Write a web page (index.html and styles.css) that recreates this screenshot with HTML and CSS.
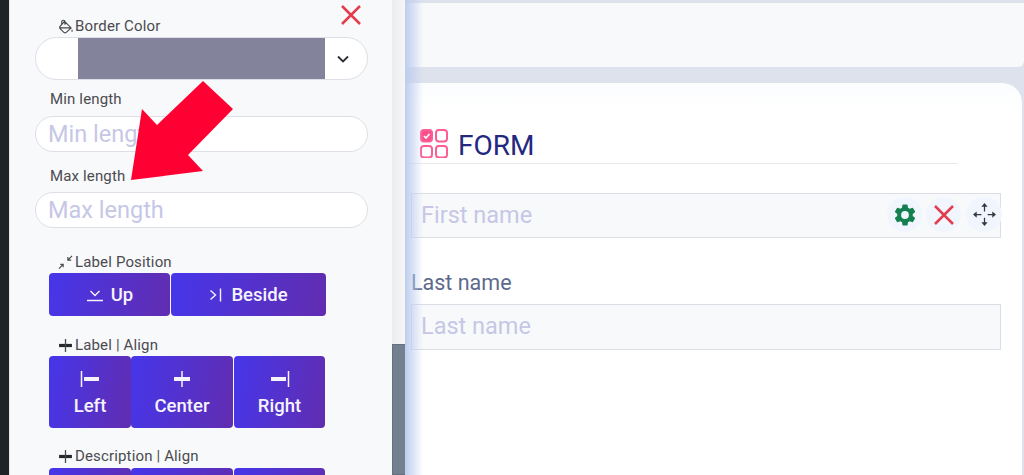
FILE: index.html
```html
<!DOCTYPE html>
<html>
	<head>
		<title>Form builder</title>
		<link rel="stylesheet" href="styles.css">
	</head>
	<body>
		<div class="Edge"></div>

		<div class="Panel">
			<svg class="Close" viewBox="0 0 22 22"><path d="M2 2L20 20M20 2L2 20" /></svg>

			<div class="Title">
				<svg class="TitleIcon" viewBox="0 0 16 16"><path d="M4 5.500V3a1.700 1.700 0 0 1 3.400 0V6M7 2.500L14 9.500L8.500 14.500Q7.500 15 6.500 14.500L2 10Q1.500 9 2 8zM2 9.500H13" /><path d="M15 11.500V13.500" /></svg>Border Color
			</div>
			<div class="ColorPick">
				<div class="Swatch"></div>
				<svg class="Chevron" viewBox="0 0 12 8"><path d="M1 1.500L6 6.500L11 1.500" /></svg>
			</div>

			<div class="FieldLabel FirstField">Min length</div>
			<input class="Pill MinPill" type="text" placeholder="Min length"/>
			<div class="FieldLabel MaxField">Max length</div>
			<input class="Pill" type="text" placeholder="Max length"/>

			<div class="Title PosTitle">
				<svg class="TitleIcon" viewBox="0 0 16 16"><path d="M1 14.500L5.500 10M2.500 10H5.500V13M15 1L10.500 5.500M10.500 2V5.500H14" /></svg>Label Position
			</div>
			<div class="BtnRow">
				<div class="Btn BtnUp">
					<svg class="BtnIcon" viewBox="0 0 18 14"><path d="M1 12.500H17M4.500 3L9 7.500L13.500 3" /></svg>Up
				</div>
				<div class="Btn BtnBeside">
					<svg class="BtnIcon" viewBox="0 0 14 14"><path d="M1.500 2.500L6.500 7L1.500 11.500M11.500 0.500V13.500" /></svg>Beside
				</div>
			</div>

			<div class="Title AlignTitle">
				<svg class="TitleIcon" viewBox="0 0 14 14"><path class="Thick" d="M1 7H13" /><path d="M7 1V13" /></svg>Label | Align
			</div>
			<div class="BtnRow">
				<div class="Btn Tall BtnLeft">
					<svg class="TallIcon" viewBox="0 0 20 18"><path d="M1.500 1V17" /><path class="Thick" d="M4 9H19" /></svg>Left
				</div>
				<div class="Btn Tall BtnCenter">
					<svg class="TallIcon" viewBox="0 0 20 18"><path d="M10 1V17" /><path class="Thick" d="M2 9H18" /></svg>Center
				</div>
				<div class="Btn Tall BtnRight">
					<svg class="TallIcon" viewBox="0 0 20 18"><path d="M18.500 1V17" /><path class="Thick" d="M1 9H16" /></svg>Right
				</div>
			</div>

			<div class="Title AlignTitle DescTitle">
				<svg class="TitleIcon" viewBox="0 0 14 14"><path class="Thick" d="M1 7H13" /><path d="M7 1V13" /></svg>Description | Align
			</div>
			<div class="BtnRow">
				<div class="Btn Tall BtnLeft"></div>
				<div class="Btn Tall BtnCenter"></div>
				<div class="Btn Tall BtnRight"></div>
			</div>
		</div>

		<div class="Scrollbar"><div class="Thumb"></div></div>

		<div class="Main">
			<div class="TopCard"></div>
			<div class="FormCard">
				<div class="FormHead">
					<svg class="FormIcon" viewBox="0 0 28 29">
						<rect class="On" x="1" y="1" width="11" height="11.500" rx="3" />
						<path class="Tick" d="M4 7l2 2 3.500-4" />
						<rect x="16" y="1" width="11" height="11.500" rx="3" />
						<rect x="1" y="17" width="11" height="11.500" rx="3" />
						<rect x="16" y="17" width="11" height="11.500" rx="3" />
					</svg>
					<span class="FormWord">FORM</span>
				</div>
				<div class="Rule"></div>

				<div class="Row">
					<input class="Box FirstBox" type="text" placeholder="First name"/>
					<div class="RowTools">
						<div class="Tool">
							<svg class="Gear" viewBox="0 0 24 24"><path d="M19.140 12.940c.04-.3.060-.61.060-.94s-.02-.64-.07-.94l2.030-1.580a.490.490 0 0 0 .12-.61l-1.920-3.320a.488.488 0 0 0-.59-.22l-2.390.96a7.030 7.030 0 0 0-1.620-.94l-.36-2.540a.484.484 0 0 0-.48-.41h-3.840a.474.474 0 0 0-.47.41l-.36 2.540c-.59.24-1.130.57-1.620.94l-2.390-.96a.470.470 0 0 0-.59.22L2.740 8.870a.470.470 0 0 0 .12.61l2.030 1.580c-.05.3-.09.63-.09.94s.02.64.07.94l-2.030 1.580a.490.490 0 0 0-.12.61l1.920 3.320c.12.22.37.29.59.22l2.390-.96c.5.380 1.030.7 1.620.94l.36 2.540c.05.24.24.41.48.41h3.840c.24 0 .44-.17.47-.41l.36-2.540c.59-.24 1.130-.56 1.620-.94l2.390.96c.22.08.47 0 .59-.22l1.920-3.320a.470.470 0 0 0-.12-.61l-2.010-1.580zM12 15.600A3.600 3.600 0 1 1 12 8.400a3.600 3.600 0 0 1 0 7.200z" /></svg>
						</div>
						<div class="Tool">
							<svg class="ToolX" viewBox="0 0 22 22"><path d="M2 2L20 20M20 2L2 20" /></svg>
						</div>
						<div class="Tool">
							<svg class="ToolMove" viewBox="0 0 24 24">
								<path d="M12 3V9M12 15V21M3 12H9M15 12H21" />
								<path class="Head" d="M12 1l-3 3.500h6zM12 23l-3-3.500h6zM1 12l3.500-3v6zM23 12l-3.500-3v6z" />
							</svg>
						</div>
					</div>
				</div>

				<div class="LastLabel">Last name</div>
				<input class="Box" type="text" placeholder="Last name"/>
			</div>
			<div class="Glow"></div>
		</div>

		<!-- annotation drawn over the screenshot -->
		<svg class="Arrow" viewBox="0 0 104 104"><path d="M73 0L103 28L58 74L73 90L1 99L12 28L27 44z" /></svg>
	</body>
</html>
```

FILE: styles.css
```css
html, body {margin: 0; height: 100%; overflow: hidden;}

body {
	display: flex;
	background-color: #f8f9fb;
	font-family: Roboto, "Liberation Sans", sans-serif;
}

.Edge {
	width: 9px;
	background-color: #1e2327;
	border-right: 1px solid #e4e6ea;
}

.Panel {
	position: relative;
	width: 333px;
	padding: 0 24px 0 25px;
	background-color: #f8f9fb;
	overflow: hidden;
	flex-shrink: 0;
}

.Close {
	position: absolute;
	top: 4px;
	left: 330px;
	width: 22px;
	height: 22px;
	fill: none;
	stroke: #e23d4d;
	stroke-width: 2.500;
}

.Title {
	display: flex;
	align-items: center;
	height: 18px;
	padding-left: 23px;
	font-size: 15px;
	letter-spacing: 0.15px;
	color: #4b4b4f;
}

.Panel > .Title:first-of-type {
	margin-top: 17px;
}

.TitleIcon {
	width: 15px;
	height: 15px;
	margin-right: 2px;
	fill: none;
	stroke: #45474b;
	stroke-width: 1.200;
}

.TitleIcon .Thick {
	stroke-width: 3;
	stroke: #25272b;
}

.ColorPick {
	display: flex;
	align-items: center;
	box-sizing: border-box;
	width: 333px;
	height: 43px;
	margin-top: 2px;
	background-color: white;
	border: 1px solid #dedfe6;
	border-radius: 22px;
}

.Swatch {
	width: 247px;
	height: 41px;
	margin-left: 42px;
	background-color: #83849c;
}

.Chevron {
	width: 12px;
	height: 8px;
	margin-left: 12px;
	fill: none;
	stroke: #2c2e33;
	stroke-width: 1.800;
}

.FieldLabel {
	height: 18px;
	padding-left: 15px;
	font-size: 15px;
	letter-spacing: 0.15px;
	line-height: 18px;
	color: #4b4b4f;
}

.FirstField {
	margin-top: 10px;
}

.MaxField {
	margin-top: 15px;
}

.Pill {
	display: block;
	box-sizing: border-box;
	width: 333px;
	height: 36px;
	margin-top: 7px;
	padding: 0 12px;
	background-color: white;
	border: 1px solid #dedfe6;
	border-radius: 18px;
	outline: none;
	font-family: inherit;
	font-size: 23.500px;
}

.MinPill {
	margin-top: 8px;
}

.Pill::placeholder, .Box::placeholder {
	color: #c6c7e6;
	opacity: 1;
}

.PosTitle {
	margin-top: 25px;
}

.BtnRow {
	display: flex;
	margin: 2px 0 0 14px;
}

.Btn {
	display: flex;
	align-items: center;
	justify-content: center;
	box-sizing: border-box;
	height: 43px;
	background-image: linear-gradient(100deg, #4636ea, #612db0);
	border-radius: 4px;
	font-size: 18.500px;
	font-weight: 500;
	color: #f5f4fd;
}

.BtnUp {width: 121px; margin-right: 1px;}
.BtnBeside {width: 155px;}

.BtnIcon {
	width: 18px;
	height: 14px;
	margin-right: 7px;
	fill: none;
	stroke: #f5f4fd;
	stroke-width: 1.400;
}

.BtnBeside .BtnIcon {
	width: 14px;
	margin-right: 8px;
}

.AlignTitle {
	margin-top: 20px;
}

.DescTitle {
	margin-top: 19px;
}

.DescTitle + .BtnRow {
	margin-top: 3px;
}

.Tall {
	flex-direction: column;
	height: 72px;
	padding-top: 3px;
}

.BtnLeft {width: 82px;}
.BtnCenter {width: 102px; margin-right: 1px;}
.BtnRight {width: 91px;}

.TallIcon {
	width: 20px;
	height: 18px;
	margin-bottom: 7px;
	fill: none;
	stroke: #f5f4fd;
	stroke-width: 1.500;
}

.TallIcon .Thick {
	stroke-width: 4;
}

.Scrollbar {
	display: flex;
	flex-direction: column;
	justify-content: flex-end;
	box-sizing: border-box;
	width: 13px;
	background-image: linear-gradient(90deg, #ececef, #f6f6f7);
	flex-shrink: 0;
}

.Thumb {
	height: 131px;
	width: 15px;
	background-color: #72808f;
	border: 1px solid #63707e;
	box-sizing: border-box;
}

.Main {
	position: relative;
	display: flex;
	flex-direction: column;
	flex: 1;
	padding-top: 3px;
	background-color: #dee2ed;
}

.TopCard {
	height: 64px;
	background-color: #f8f9fb;
	border-bottom-right-radius: 6px;
	flex-shrink: 0;
}

.FormCard {
	flex: 1;
	margin: 16px 2px 0 0;
	padding: 46px 0 0 6px;
	background-image: linear-gradient(#fbfcfe, white 30px);
	border-top-right-radius: 20px;
}

.FormHead {
	display: flex;
	align-items: center;
	height: 29px;
	margin-left: 9px;
	font-size: 28px;
	color: #24297f;
}

.FormWord {
	margin-top: 4px;
}

.FormIcon {
	width: 28px;
	height: 29px;
	margin-right: 10px;
	fill: none;
	stroke: #fb5f96;
	stroke-width: 2;
}

.FormIcon .On {
	fill: #fb4f8c;
}

.FormIcon .Tick {
	stroke: white;
	stroke-width: 1.600;
}

.Rule {
	width: 553px;
	height: 1px;
	margin: 5px 0 29px -6px;
	background-color: #e8e9ee;
}

.Row {
	position: relative;
}

.Box {
	display: block;
	box-sizing: border-box;
	width: 590px;
	height: 46px;
	padding: 0 9px 2px;
	background-color: #f8f9fb;
	border: 1px solid #dcdde6;
	outline: none;
	font-family: inherit;
	font-size: 23.500px;
}

.FirstBox {
	height: 45px;
}

.RowTools {
	position: absolute;
	top: 4px;
	left: 476px;
	display: flex;
	gap: 4px;
}

.Tool {
	display: flex;
	align-items: center;
	justify-content: center;
	width: 35px;
	height: 35px;
	background-color: #f1f6fe;
	border-radius: 50%;
}

.Tool:last-child {
	width: 36px;
	margin-left: 1px;
}

.Gear {
	width: 26px;
	height: 26px;
	fill: #15804f;
}

.ToolX {
	width: 22px;
	height: 22px;
	fill: none;
	stroke: #e23d4d;
	stroke-width: 2.500;
}

.ToolMove {
	width: 25px;
	height: 25px;
	fill: none;
	stroke: #34373d;
	stroke-width: 1.200;
}

.ToolMove .Head {
	fill: #34373d;
	stroke: none;
}

.LastLabel {
	height: 24px;
	margin: 33px 0 9px;
	font-size: 21.500px;
	line-height: 24px;
	color: #5d6a8c;
}

.Glow {
	position: absolute;
	top: 0;
	left: 0;
	width: 18px;
	height: 100%;
	background-image: linear-gradient(90deg, #bccdee, rgba(188, 205, 238, 0));
}

.Arrow {
	position: absolute;
	top: 81px;
	left: 130px;
	width: 104px;
	height: 104px;
	fill: #ff0033;
}
```
